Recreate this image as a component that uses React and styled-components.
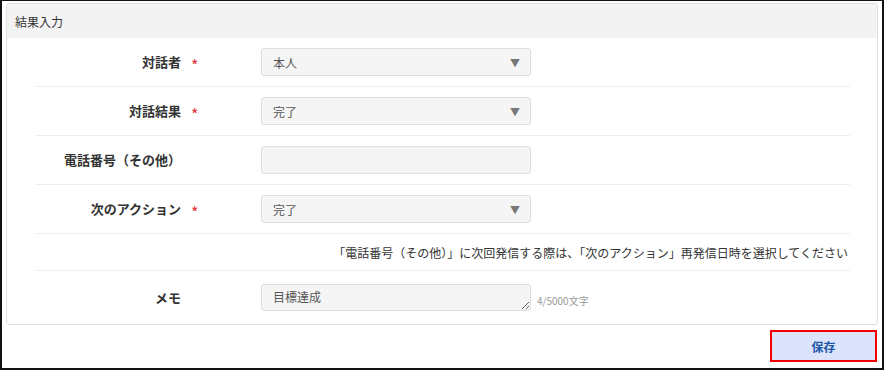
import styled, { createGlobalStyle } from "styled-components"

const Global = createGlobalStyle`
    html, body {
        margin: 0;
        padding: 0;
        background: #FFFFFF;
    }
    body {
        font-family: 'Noto Sans CJK JP', 'Noto Sans', sans-serif;
        color: #333333;
    }
`

const fields = [
    { label: "対話者", required: true, type: "select", value: "本人" },
    { label: "対話結果", required: true, type: "select", value: "完了" },
    { label: "電話番号（その他）", required: false, type: "text", value: "" },
    { label: "次のアクション", required: true, type: "select", value: "完了" },
]

export default function App(){
    return (
        <>
            <Global />
            <Frame>
                <Panel>
                    <PanelHeader>結果入力</PanelHeader>
                    <PanelBody>
                        {fields.map((f) => (
                            <Row key={f.label}>
                                <Label>{f.label}</Label>
                                <Star>{f.required ? "*" : ""}</Star>
                                {f.type === "select" ? (
                                    <SelectBox>
                                        <span>{f.value}</span>
                                        <Arrow>▼</Arrow>
                                    </SelectBox>
                                ) : (
                                    <TextBox type="text" defaultValue={f.value} />
                                )}
                            </Row>
                        ))}
                        <HintRow>
                            「電話番号（その他）」に次回発信する際は、「次のアクション」再発信日時を選択してください
                        </HintRow>
                        <Row $last>
                            <Label>メモ</Label>
                            <Star />
                            <MemoWrap>
                                <Memo defaultValue="目標達成" />
                                <Counter>4/5000文字</Counter>
                            </MemoWrap>
                        </Row>
                    </PanelBody>
                </Panel>
                <Footer>
                    <SaveBtn>保存</SaveBtn>
                </Footer>
            </Frame>
        </>
    )
}

const Frame = styled.div`
    width: 884px;
    height: 370px;
    box-sizing: border-box;
    border: 2px solid #111111;
    border-top-width: 1px;
    padding: 2px 4px 0 4px;
    display: flex;
    flex-direction: column;
`

const Panel = styled.div`
    border: 1px solid #E0E0E0;
    border-radius: 3px;
    background: #FFFFFF;
    overflow: hidden;
`

const PanelHeader = styled.div`
    height: 34px;
    background: #F3F3F3;
    padding-left: 8px;
    display: flex;
    align-items: center;
    font-size: 12px;
    color: #333333;
`

const PanelBody = styled.div`
    padding: 0 27px 0 29px;
`

const Row = styled.div`
    height: ${(p) => (p.$last ? "53px" : "48px")};
    display: flex;
    align-items: center;
    border-bottom: ${(p) => (p.$last ? "none" : "1px solid #EEEEEE")};
`

const Label = styled.div`
    width: 145px;
    text-align: right;
    font-size: 13px;
    font-weight: bold;
    color: #333333;
    line-height: 18px;
`

const Star = styled.div`
    width: 70px;
    height: 18px;
    padding-left: 10px;
    color: #E0303A;
    font-size: 16px;
    line-height: 18px;
    padding-top: 5px;
    box-sizing: content-box;
`

const SelectBox = styled.div`
    width: 270px;
    height: 28px;
    box-sizing: border-box;
    border: 1px solid #DDDDDD;
    border-radius: 3px;
    background: #F5F5F5;
    padding: 0 10px 0 11px;
    display: flex;
    align-items: center;
    justify-content: space-between;
    font-size: 12px;
    color: #555555;
`

const Arrow = styled.span`
    font-size: 10px;
    color: #777777;
`

const TextBox = styled.input`
    width: 270px;
    height: 28px;
    box-sizing: border-box;
    border: 1px solid #DDDDDD;
    border-radius: 3px;
    background: #F5F5F5;
    padding: 0 11px;
    font-family: inherit;
    font-size: 12px;
    outline: none;
`

const HintRow = styled.div`
    height: 36px;
    display: flex;
    align-items: center;
    justify-content: flex-end;
    padding-right: 2px;
    border-bottom: 1px solid #EEEEEE;
    font-size: 12px;
    color: #333333;
`

const MemoWrap = styled.div`
    display: flex;
    align-items: flex-end;
    gap: 6px;
`

const Memo = styled.textarea`
    width: 270px;
    height: 27px;
    box-sizing: border-box;
    border: 1px solid #DDDDDD;
    border-radius: 3px;
    background: #F5F5F5;
    padding: 3px 11px;
    font-family: inherit;
    font-size: 12px;
    line-height: 18px;
    color: #555555;
    resize: vertical;
    outline: none;
    display: block;
`

const Counter = styled.span`
    font-size: 10px;
    color: #999999;
    line-height: 14px;
    margin-bottom: 3px;
`

const Footer = styled.div`
    display: flex;
    justify-content: flex-end;
    padding-top: 5px;
    padding-right: 1px;
`

const SaveBtn = styled.button`
    width: 107px;
    height: 32px;
    box-sizing: border-box;
    border: 2px solid #F00000;
    background: #DCE4FB;
    font-family: inherit;
    font-size: 12px;
    font-weight: bold;
    color: #1F57A8;
    cursor: pointer;
`
